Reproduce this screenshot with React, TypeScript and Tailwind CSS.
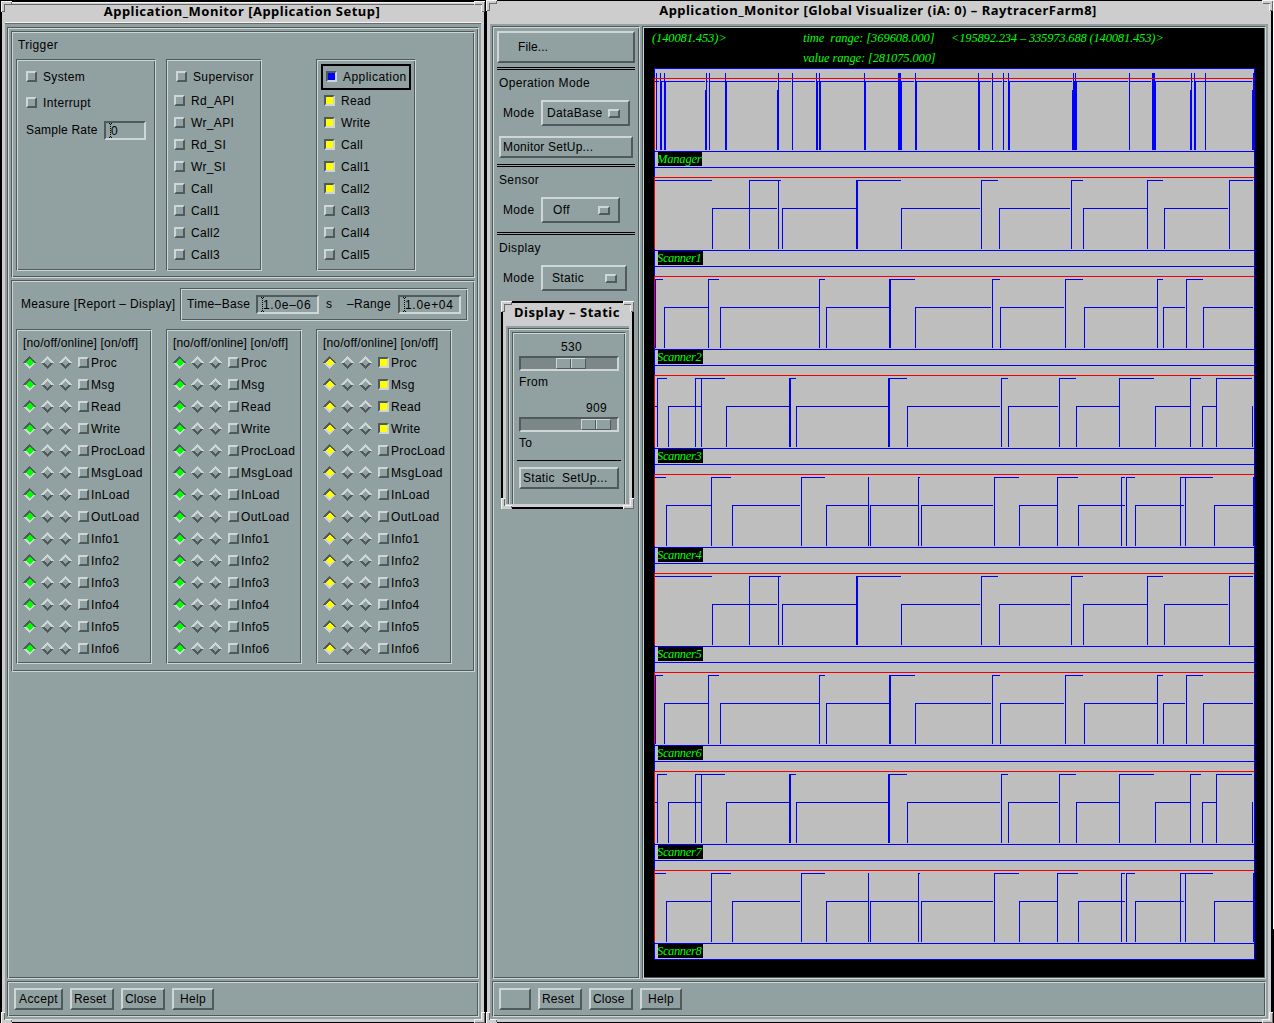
import type { ReactNode } from "react";
import clsx from "clsx";

const groove =
    "border border-t-[#4f5b5b] border-l-[#4f5b5b] border-b-[#ced6d6] border-r-[#ced6d6] shadow-[inset_1px_1px_0_#ced6d6,inset_-1px_-1px_0_#4f5b5b]";
const raised =
    "border-2 border-t-[#ced6d6] border-l-[#ced6d6] border-b-[#4f5b5b] border-r-[#4f5b5b]";
const sunken =
    "border-2 border-t-[#4f5b5b] border-l-[#4f5b5b] border-b-[#ced6d6] border-r-[#ced6d6]";

/* ---------- window decoration ---------- */

// resize handles: body, lit edges, shaded edges
const corners = {
    tl: ["M0 0H11V4H4V11H0Z", "M0 0H11V1H1V11H0Z", "M10 1h1v3H4v7H1v-1h2V3h7z"],
    tr: ["M0 0H11V11H7V4H0Z", "M0 0H11V1H1V3H0ZM7 4h1v7H7z", "M1 3h7v1H1zM10 1h1v10H8v-1h2z"],
    bl: ["M0 0H4V7H11V11H0Z", "M0 0H4V1H1V11H0ZM4 7h7v1H4z", "M3 1h1v7H3zM1 10h10V8h-1v2H1z"],
    br: ["M7 0H11V11H0V7H7Z", "M7 0h4v1H8v7H1v3H0V7h7z", "M10 1h1v10H1v-1h9z"],
};

function Corner({ at, className }: { at: keyof typeof corners; className: string }) {
    const [body, light, dark] = corners[at];
    return (
        <svg className={clsx("absolute", className)} width="11" height="11" viewBox="0 0 11 11" shapeRendering="crispEdges">
            <path d={body} fill="#cdcdcd" />
            <path d={light} fill="#f4f4f4" />
            <path d={dark} fill="#6a6a6a" />
        </svg>
    );
}

/* ---------- controls ---------- */

type CheckProps = { label: string; on?: "blue" | "yellow" };

function Box({ on }: { on?: "blue" | "yellow" }) {
    return (
        <span
            className={clsx(
                "block size-[11px] shrink-0",
                on ? sunken : raised,
                on === "blue" && "bg-[#0000ff]",
                on === "yellow" && "bg-[#ffff00]",
            )}
        />
    );
}

function Check({ label, on }: CheckProps) {
    return (
        <div className="flex h-[11px] items-center gap-[6px]">
            <Box on={on} />
            <span>{label}</span>
        </div>
    );
}

function Diamond({ fill }: { fill?: string }) {
    return (
        <svg className="-my-px shrink-0" width="13" height="13" viewBox="0 0 13 13" shapeRendering="crispEdges">
            <path d="M0 6.5L6.5 0L13 6.5H10L6.5 3L3 6.5Z" fill={fill ? "#4f5b5b" : "#ced6d6"} />
            <path d="M0 6.5L6.5 13L13 6.5H10L6.5 10L3 6.5Z" fill={fill ? "#ced6d6" : "#4f5b5b"} />
            {fill && <path d="M2.5 6.5L6.5 2.5L10.5 6.5L6.5 10.5Z" fill={fill} />}
        </svg>
    );
}

function Field({ value, className }: { value: string; className: string }) {
    return (
        <div className={clsx("flex h-[19px] items-center pl-[2px]", sunken, className)}>
            <svg width="5" height="15" viewBox="0 0 5 15" className="-mr-[2px] shrink-0" shapeRendering="crispEdges">
                <path d="M2 1h1v1H2zM2 3h1v1H2zM2 5h1v1H2zM2 7h1v1H2zM2 9h1v1H2zM2 11h1v1H2zM2 13h1v1H2z" />
                <path d="M1 0h1v1H1zM3 0h1v1H3zM1 14h1v1H1zM3 14h1v1H3z" />
            </svg>
            <span className="tracking-[0.7px]">{value}</span>
        </div>
    );
}

function Button({ children, className }: { children?: ReactNode; className: string }) {
    return <div className={clsx("flex h-[22px] items-center whitespace-pre", raised, className)}>{children}</div>;
}

function Option({ value, className }: { value: string; className: string }) {
    return (
        <div className="flex items-center">
            <span className="w-[39px] pl-px">Mode</span>
            <div className={clsx("flex h-[26px] items-center justify-between pr-[8px]", raised, className)}>
                <span className="-mt-px">{value}</span>
                <span className={clsx("block h-[9px] w-[12px]", raised)} />
            </div>
        </div>
    );
}

function Slider({ value, label, valueClass, thumbClass }: { value: string; label: string; valueClass: string; thumbClass: string }) {
    return (
        <div className="h-[61px]">
            <div className={clsx("h-[18px] leading-[18px]", valueClass)}>{value}</div>
            <div className={clsx("flex h-[15px] w-[100px] bg-[#7b8887]", sunken)}>
                <div className={clsx("flex h-[11px] w-[30px] border border-t-[#ced6d6] border-l-[#ced6d6] border-b-[#4f5b5b] border-r-[#4f5b5b] bg-[#91a0a0]", thumbClass)}>
                    <div className="w-[14px] border-r border-[#4f5b5b]" />
                    <div className="flex-1 border-l border-[#ced6d6]" />
                </div>
            </div>
            <div className="leading-[22px]">{label}</div>
        </div>
    );
}

/* ---------- application setup ---------- */

const supervisor = ["Rd_API", "Wr_API", "Rd_SI", "Wr_SI", "Call", "Call1", "Call2", "Call3"];
const application = ["Read", "Write", "Call", "Call1", "Call2", "Call3", "Call4", "Call5"];
const measures = [
    "Proc", "Msg", "Read", "Write", "ProcLoad", "MsgLoad", "InLoad", "OutLoad",
    "Info1", "Info2", "Info3", "Info4", "Info5", "Info6",
];

function MeasureBox({ color, active = 0 }: { color: string; active?: number }) {
    return (
        <div className={clsx("h-[335px] w-[136px] pl-[6px]", groove)}>
            <div className="h-[27px] leading-[26px] tracking-[0.15px] whitespace-nowrap">[no/off/online] [on/off]</div>
            <div className="flex flex-col gap-[11px]">
                {measures.map((m, i) => (
                    <div key={m} className="flex h-[11px] items-center">
                        <div className="mr-[6px] flex gap-[5px]">
                            <Diamond fill={color} />
                            <Diamond />
                            <Diamond />
                        </div>
                        <Box on={i < active ? "yellow" : undefined} />
                        <span className="ml-[2px]">{m}</span>
                    </div>
                ))}
            </div>
        </div>
    );
}

function SetupWindow() {
    return (
        <div className="relative mt-[2px] ml-[2px] flex h-[1020px] w-[482px] flex-col bg-[#cdcdcd]">
            <div className="h-[22px] px-[3px]">
                <div className="mx-[7px] h-[3px] border-t border-b border-t-[#f4f4f4] border-b-[#6a6a6a]" />
                <div className="h-[17px] pr-[2px] text-center font-['Noto_Sans'] text-[13px] leading-[12px] font-bold tracking-[0.48px]">
                    Application_Monitor [Application Setup]
                </div>
                <div className="h-[2px] border-t border-b border-t-[#f4f4f4] border-b-[#6a6a6a]" />
            </div>
            <div className="mx-[3px] flex h-[995px] flex-col gap-[2px] bg-[#91a0a0] px-[2px] pt-[3px] pb-[2px]">
                <div className={clsx("h-[952px] px-[3px] pt-[3px]", groove)}>
                    <div className={clsx("h-[247px]", groove)}>
                        <div className="h-[27px] pl-[6px] leading-[26px]">Trigger</div>
                        <div className="flex pl-[4px]">
                            <div className={clsx("flex h-[212px] w-[140px] flex-col pt-[11px] pl-[9px]", groove)}>
                                <Check label="System" />
                                <div className="mt-[15px]">
                                    <Check label="Interrupt" />
                                </div>
                                <div className="mt-[13px] flex items-center">
                                    <span className="-mt-[2px] w-[78px] tracking-[0.2px] whitespace-nowrap">Sample Rate</span>
                                    <Field value="0" className="w-[42px]" />
                                </div>
                            </div>
                            <div className={clsx("ml-[10px] h-[212px] w-[96px] pt-[11px] pl-[7px]", groove)}>
                                <div className="mb-[13px] pl-[2px]">
                                    <Check label="Supervisor" />
                                </div>
                                <div className="flex flex-col gap-[11px]">
                                    {supervisor.map((s) => (
                                        <Check key={s} label={s} />
                                    ))}
                                </div>
                            </div>
                            <div className={clsx("ml-[54px] h-[212px] w-[100px] pt-[4px] pl-[4px]", groove)}>
                                <div className="mb-[5px] h-[26px] w-[90px] border-2 border-black pt-[5px] pl-[3px] tracking-[0.45px]">
                                    <Check label="Application" on="blue" />
                                </div>
                                <div className="flex flex-col gap-[11px] pl-[3px]">
                                    {application.map((a, i) => (
                                        <Check key={a} label={a} on={i < 5 ? "yellow" : undefined} />
                                    ))}
                                </div>
                            </div>
                        </div>
                    </div>

                    <div className={clsx("mt-[2px] h-[392px] pt-[7px]", groove)}>
                        <div className="flex items-center pl-[9px]">
                            <span className="-mt-[2px] w-[159px] whitespace-nowrap">Measure [Report – Display]</span>
                            <div className={clsx("flex h-[33px] w-[288px] items-center pl-[6px]", groove)}>
                                <span className="-mt-[2px] w-[69px]">Time–Base</span>
                                <Field value="1.0e–06" className="w-[63px]" />
                                <span className="-mt-[2px] w-[21px] pl-[7px]">s</span>
                                <span className="-mt-[2px] w-[58px] pl-[7px]">–Range</span>
                                <Field value="1.0e+04" className="w-[63px]" />
                            </div>
                        </div>
                        <div className="mt-[8px] flex gap-[14px] pl-[4px]">
                            <MeasureBox color="#00ff00" />
                            <MeasureBox color="#00ff00" />
                            <MeasureBox color="#ffff00" active={4} />
                        </div>
                    </div>
                </div>
                <div className={clsx("flex h-[36px] gap-[7px] pt-[6px] pl-[6px]", groove)}>
                    <Button className="w-[49px] justify-center">Accept</Button>
                    <Button className="w-[44px] pl-[2px] tracking-[0.2px]">Reset</Button>
                    <Button className="w-[44px] pl-[2px] tracking-[0.2px]">Close</Button>
                    <Button className="w-[42px] justify-center">Help</Button>
                </div>
            </div>
            <Corner at="tl" className="-top-px -left-px" />
            <Corner at="tr" className="-top-px -right-px" />
            <Corner at="bl" className="-bottom-px -left-px" />
            <Corner at="br" className="-right-px -bottom-px" />
        </div>
    );
}

/* ---------- traces ---------- */

// [start, end, level, edge width]; edge 0 = the run comes in from the left without a step
type Run = [number, number, "h" | "m", number?];

const traceA: Run[] = [
    [655, 711, "h", 0], [712, 776, "m"], [749, 780, "h"], [778, 778, "h"], [782, 855, "m"], [856, 900, "h", 2],
    [901, 979, "m"], [981, 997, "h"], [999, 1069, "m"], [1071, 1082, "h"], [1083, 1146, "m"], [1147, 1162, "h"],
    [1164, 1227, "m"], [1229, 1252, "h"],
];
const traceB: Run[] = [
    [655, 662, "h"], [664, 707, "m"], [708, 718, "h"], [720, 818, "m"], [819, 824, "h"], [826, 888, "m"],
    [889, 914, "h", 2], [915, 990, "m"], [992, 999, "h"], [1000, 1063, "m"], [1065, 1082, "h"], [1084, 1156, "m"],
    [1157, 1162, "h"], [1163, 1184, "m"], [1186, 1202, "h"], [1203, 1252, "m"],
];
const traceC: Run[] = [
    [655, 656, "m", 0], [657, 666, "h"], [668, 701, "m"], [695, 724, "h"], [701, 701, "h"], [726, 788, "m"],
    [789, 795, "h", 2], [796, 887, "m"], [888, 906, "h", 2], [907, 999, "m"], [1001, 1007, "h"], [1008, 1057, "m"],
    [1059, 1075, "h"], [1076, 1118, "m"], [1119, 1153, "h"], [1155, 1189, "m"], [1190, 1200, "h"], [1202, 1215, "m"],
    [1216, 1251, "h"], [1252, 1252, "m"],
];
const traceD: Run[] = [
    [655, 665, "h", 0], [666, 710, "m"], [711, 730, "h"], [732, 799, "m"], [801, 824, "h"], [826, 867, "m"],
    [868, 868, "h"], [870, 917, "m"], [918, 919, "h"], [921, 992, "m"], [994, 1018, "h"], [1019, 1056, "m"],
    [1057, 1077, "h"], [1078, 1124, "m"], [1121, 1124, "h"], [1126, 1134, "h"], [1135, 1183, "m"], [1180, 1212, "h"],
    [1185, 1185, "h"], [1214, 1252, "m"], [1253, 1253, "h"],
];
const traces = [traceA, traceB, traceC, traceD];

// manager activity: [x, top, width]
const spikes: [number, number, number?][] = [
    [656, 73], [660, 73], [661, 81], [664, 73], [665, 81], [705, 90], [706, 73], [709, 73], [725, 73], [726, 81],
    [777, 90], [778, 73], [792, 73], [816, 73], [817, 81], [819, 73], [820, 81], [864, 73], [865, 81], [898, 73, 3],
    [901, 81], [915, 73], [916, 81], [978, 73], [979, 81], [992, 73], [1003, 73], [1008, 73], [1009, 81],
    [1072, 90], [1073, 73], [1074, 81], [1075, 73], [1076, 81], [1129, 73], [1152, 73, 3], [1155, 81],
    [1190, 90], [1191, 73], [1194, 73], [1195, 81], [1205, 73], [1252, 90], [1253, 73],
];
const plateaus = [
    [655, 658], [661, 704], [707, 707], [709, 776], [779, 790], [793, 814], [818, 913], [917, 990], [993, 1001],
    [1004, 1006], [1009, 1071], [1077, 1127], [1130, 1150], [1156, 1189], [1192, 1192], [1195, 1251],
];

function Trace({ runs, y }: { runs: Run[]; y: number }) {
    return (
        <g fill="#0000ec">
            {runs.map(([x, end, level, edge = 1], i) => {
                const top = y + (level === "h" ? 13 : 41);
                return (
                    <g key={i}>
                        <rect x={x} y={top} width={end - x + 1} height="1" />
                        {edge > 0 && <rect x={x} y={top} width={edge} height={y + 82 - top} />}
                    </g>
                );
            })}
        </g>
    );
}

const names = ["Manager", "Scanner1", "Scanner2", "Scanner3", "Scanner4", "Scanner5", "Scanner6", "Scanner7", "Scanner8"];

function Visualizer() {
    return (
        <svg
            width="620"
            height="949"
            viewBox="644 28 620 949"
            shapeRendering="crispEdges"
            className="block bg-black font-['Liberation_Serif',serif] text-[12.5px] italic"
        >
            <g fill="#00ff00">
                <text x="652" y="42" textLength="75">(140081.453)&gt;</text>
                <text x="803" y="42" textLength="132" xmlSpace="preserve">time  range: [369608.000]</text>
                <text x="951" y="42" textLength="213">&lt;195892.234 – 335973.688 (140081.453)&gt;</text>
                <text x="803" y="62" textLength="133">value range: [281075.000]</text>
            </g>
            <rect x="654.5" y="68.5" width="600" height="891" fill="#bebebe" stroke="#0000ff" />
            {names.map((name, i) => {
                const y = 68 + i * 99;
                return (
                    <g key={name}>
                        <rect x="654" y={y} width="601" height="1" fill="#0000ff" />
                        <rect x="654" y={y + 83} width="601" height="1" fill="#0000ff" />
                        {i > 0 && <Trace runs={traces[(i - 1) % 4]} y={y} />}
                        {i === 0 && (
                            <g fill="#0000ff">
                                {plateaus.map(([a, b]) => (
                                    <rect key={a} x={a} y="81" width={b - a + 1} height="1" />
                                ))}
                                {spikes.map(([x, top, w = 1]) => (
                                    <rect key={x} x={x} y={top} width={w} height={150 - top} />
                                ))}
                            </g>
                        )}
                        <rect x="654" y={y + 10} width="600" height="1" fill="#f00000" />
                        <rect x="654" y={y + 10} width="1" height="72" fill="#f00000" />
                        <rect x="658" y={y + 84} width={i ? 45 : 44} height="14" />
                        <text x="657" y={y + 95} textLength="45" fill="#00ff00">{name}</text>
                    </g>
                );
            })}
        </svg>
    );
}

/* ---------- global visualizer ---------- */

function Rule() {
    return <div className="mx-[4px] h-[3px] border-y border-black" />;
}

function Section({ title, children }: { title: string; children: ReactNode }) {
    return (
        <div className="pl-[6px]">
            <div className="h-[30px] leading-[26px]">{title}</div>
            <div className="pl-[3px]">{children}</div>
        </div>
    );
}

function StaticWindow() {
    return (
        <div className="relative mt-[10px] ml-[8px] h-[208px] w-[133px] border-2 border-black bg-[#cdcdcd]">
            <div className="h-[23px] pr-px text-center font-['Noto_Sans'] text-[13px] leading-[18px] font-bold tracking-[0.55px] whitespace-nowrap">
                Display – Static
            </div>
            <div className="mx-[3px] h-[178px] bg-[#91a0a0] pt-[2px] pl-[2px]">
                <div className="h-[176px] border-t border-l border-[#4f5b5b] pt-[3px] pl-[3px] shadow-[inset_1px_1px_0_#ced6d6]">
                    <div className="h-[172px] w-[114px] border border-t-[#4f5b5b] border-r-[#ced6d6] border-b-0 border-l-[#4f5b5b] pt-[5px] pl-[6px] shadow-[inset_1px_1px_0_#ced6d6,inset_-1px_0_0_#4f5b5b]">
                        <Slider value="530" label="From" valueClass="pl-[42px]" thumbClass="ml-[35px]" />
                        <Slider value="909" label="To" valueClass="pl-[67px]" thumbClass="ml-[60px]" />
                        <div className="-ml-[2px] h-px w-[104px] bg-black" />
                        <Button className="mt-[6px] w-[100px] pl-[2px] tracking-[0.28px]">Static  SetUp...</Button>
                    </div>
                </div>
            </div>
            <Corner at="tl" className="-top-[2px] -left-[2px]" />
            <Corner at="tr" className="-top-[2px] -right-[2px]" />
            <Corner at="bl" className="-bottom-[2px] -left-[2px]" />
            <Corner at="br" className="-right-[2px] -bottom-[2px]" />
        </div>
    );
}

function VisualizerWindow() {
    return (
        <div className="relative mt-px ml-[3px] flex h-[1021px] w-[784px] flex-col bg-[#cdcdcd]">
            <div className="h-[23px] pr-[2px] text-center font-['Noto_Sans'] text-[13px] leading-[18px] font-bold tracking-[0.47px]">
                Application_Monitor [Global Visualizer (iA: 0) – RaytracerFarm8]
            </div>
            <div className="mx-[3px] flex h-[995px] flex-col gap-[2px] bg-[#91a0a0] px-[2px] pt-[2px]">
                <div className="flex gap-[2px]">
                    <div className={clsx("h-[953px] w-[148px] pt-[4px]", groove)}>
                        <div className={clsx("mx-[4px] mb-[4px] flex h-[32px] w-[138px] items-center pl-[19px]", raised)}>
                            <span className="tracking-[0.1px]">File...</span>
                        </div>
                        <Rule />
                        <Section title="Operation Mode">
                            <Option value="DataBase" className="w-[89px] pl-[4px]" />
                        </Section>
                        <Button className="mt-[10px] mb-[6px] ml-[6px] w-[134px] pl-[2px] tracking-[0.22px]">Monitor SetUp...</Button>
                        <Rule />
                        <Section title="Sensor">
                            <Option value="Off" className="w-[79px] pl-[10px]" />
                        </Section>
                        <div className="h-[9px]" />
                        <Rule />
                        <Section title="Display">
                            <Option value="Static" className="w-[86px] pl-[9px]" />
                        </Section>
                        <StaticWindow />
                    </div>
                    <div className={clsx("p-px", groove)}>
                        <Visualizer />
                    </div>
                </div>
                <div className={clsx("flex h-[36px] gap-[7px] pt-[6px] pl-[6px]", groove)}>
                    <Button className="w-[32px]" />
                    <Button className="w-[44px] pl-[2px] tracking-[0.2px]">Reset</Button>
                    <Button className="w-[44px] pl-[2px] tracking-[0.2px]">Close</Button>
                    <Button className="w-[42px] justify-center">Help</Button>
                </div>
            </div>
            <Corner at="tl" className="-top-px -left-px" />
            <Corner at="tr" className="-top-px -right-[2px]" />
            <Corner at="bl" className="-bottom-px -left-px" />
            <Corner at="br" className="-right-[2px] -bottom-px" />
        </div>
    );
}

export default function App() {
    return (
        <div className="flex h-[1023px] w-[1274px] overflow-hidden bg-black font-['Liberation_Sans',Arial,sans-serif] text-[12px] leading-[14px] tracking-[0.35px] text-black">
            <SetupWindow />
            <VisualizerWindow />
            {/* sliver of the desktop at the right edge */}
            <div className="ml-[2px] h-[929px] w-px bg-white" />
        </div>
    );
}
